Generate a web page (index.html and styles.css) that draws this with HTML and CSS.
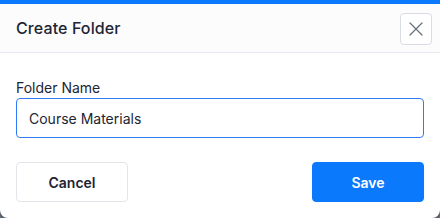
FILE: index.html
```html
<!DOCTYPE html>
<html>
<head>
<meta charset="utf-8">
<link rel="stylesheet" href="styles.css">
</head>
<body>
<div class="modal">
  <div class="modal-header">
    <h2 class="modal-title">Create Folder</h2>
    <button class="close-btn" aria-label="Close">
      <svg width="16" height="16" viewBox="0 0 16 16"><path d="M2 2L14 14M14 2L2 14" stroke="#6b7280" stroke-width="1.3" stroke-linecap="round" fill="none"/></svg>
    </button>
  </div>
  <div class="modal-body">
    <label class="field-label" for="fname">Folder Name</label>
    <input id="fname" class="field-input" type="text" value="Course Materials">
    <div class="actions">
      <button class="btn btn-cancel">Cancel</button>
      <button class="btn btn-save">Save</button>
    </div>
  </div>
</div>
</body>
</html>
```
FILE: styles.css
```css
html, body {
  margin: 0;
  padding: 0;
}
body {
  width: 440px;
  height: 218px;
  background: #5b6470;
  font-family: Inter, "Liberation Sans", sans-serif;
  color: #1d2433;
  overflow: hidden;
}
.modal {
  width: 440px;
  height: 218px;
  box-sizing: border-box;
  background: #ffffff;
  border-top: 4px solid #0b79fb;
  border-radius: 0 0 8px 8px;
  display: flex;
  flex-direction: column;
}
.modal-header {
  height: 48px;
  box-sizing: content-box;
  background: #fcfcfd;
  border-bottom: 1px solid #e4e8ef;
  display: flex;
  align-items: center;
  justify-content: space-between;
  padding: 0 8px 0 16px;
}
.modal-title {
  margin: 0;
  font-size: 16px;
  font-weight: 500;
  color: #1d2433;
  letter-spacing: 0.1px;
}
.close-btn {
  width: 32px;
  height: 32px;
  box-sizing: border-box;
  border: 1px solid #d8dce3;
  border-radius: 4px;
  background: #ffffff;
  display: flex;
  align-items: center;
  justify-content: center;
  padding: 0;
  margin-top: 1px;
}
.modal-body {
  padding: 25px 16px 16px;
  display: flex;
  flex-direction: column;
}
.field-label {
  font-size: 14px;
  line-height: 20px;
  font-weight: 400;
  color: #1d2433;
}
.field-input {
  height: 40px;
  box-sizing: border-box;
  border: 1px solid #2f7cf6;
  border-radius: 4px;
  padding: 0 12px;
  font-family: Inter, "Liberation Sans", sans-serif;
  font-size: 14px;
  color: #1d2433;
  outline: none;
}
.actions {
  margin-top: 24px;
  display: flex;
  justify-content: space-between;
}
.btn {
  width: 112px;
  height: 40px;
  box-sizing: border-box;
  border-radius: 4px;
  font-family: Inter, "Liberation Sans", sans-serif;
  font-size: 14px;
  font-weight: 600;
}
.btn-cancel {
  background: #ffffff;
  border: 1px solid #e2e5ea;
  color: #1d2433;
}
.btn-save {
  background: #0b79fb;
  border: 1px solid #0b79fb;
  color: #ffffff;
}
```
